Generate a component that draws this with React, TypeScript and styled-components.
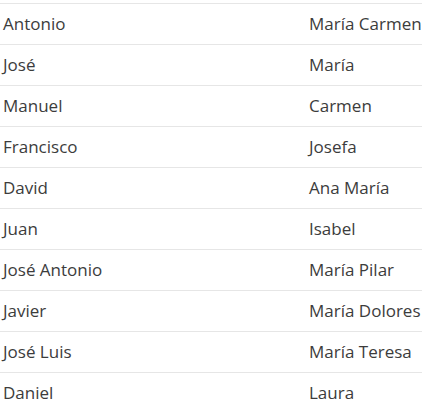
import React from "react";
import styled, { createGlobalStyle } from "styled-components";

const rows: [string, string][] = [
	["Antonio", "María Carmen"],
	["José", "María"],
	["Manuel", "Carmen"],
	["Francisco", "Josefa"],
	["David", "Ana María"],
	["Juan", "Isabel"],
	["José Antonio", "María Pilar"],
	["Javier", "María Dolores"],
	["José Luis", "María Teresa"],
	["Daniel", "Laura"],
];

const App: React.FC = () => {
	return (
		<>
			<GlobalStyle />
			<NameTable>
				{rows.map(([male, female]) => (
					<NameRow key={male}>
						<NameCell>{male}</NameCell>
						<NameCell>{female}</NameCell>
					</NameRow>
				))}
			</NameTable>
		</>
	);
};

export default App;

const GlobalStyle = createGlobalStyle`
	body {
		margin: 0;
		background: #ffffff;
		font-family: "Open Sans", sans-serif;
	}
`;

const NameTable = styled.div`
	width: 422px;
	height: 413px;
	overflow: hidden;
	padding-top: 3px;
	box-sizing: border-box;
`;

const NameRow = styled.div`
	display: grid;
	grid-template-columns: 306px 1fr;
	height: 41px;
	box-sizing: border-box;
	border-top: 1px solid #e6e6e6;
`;

const NameCell = styled.div`
	display: flex;
	align-items: center;
	padding-left: 3px;
	padding-bottom: 1px;
	font-size: 17px;
	color: #3c3c3c;
	white-space: nowrap;
`;
